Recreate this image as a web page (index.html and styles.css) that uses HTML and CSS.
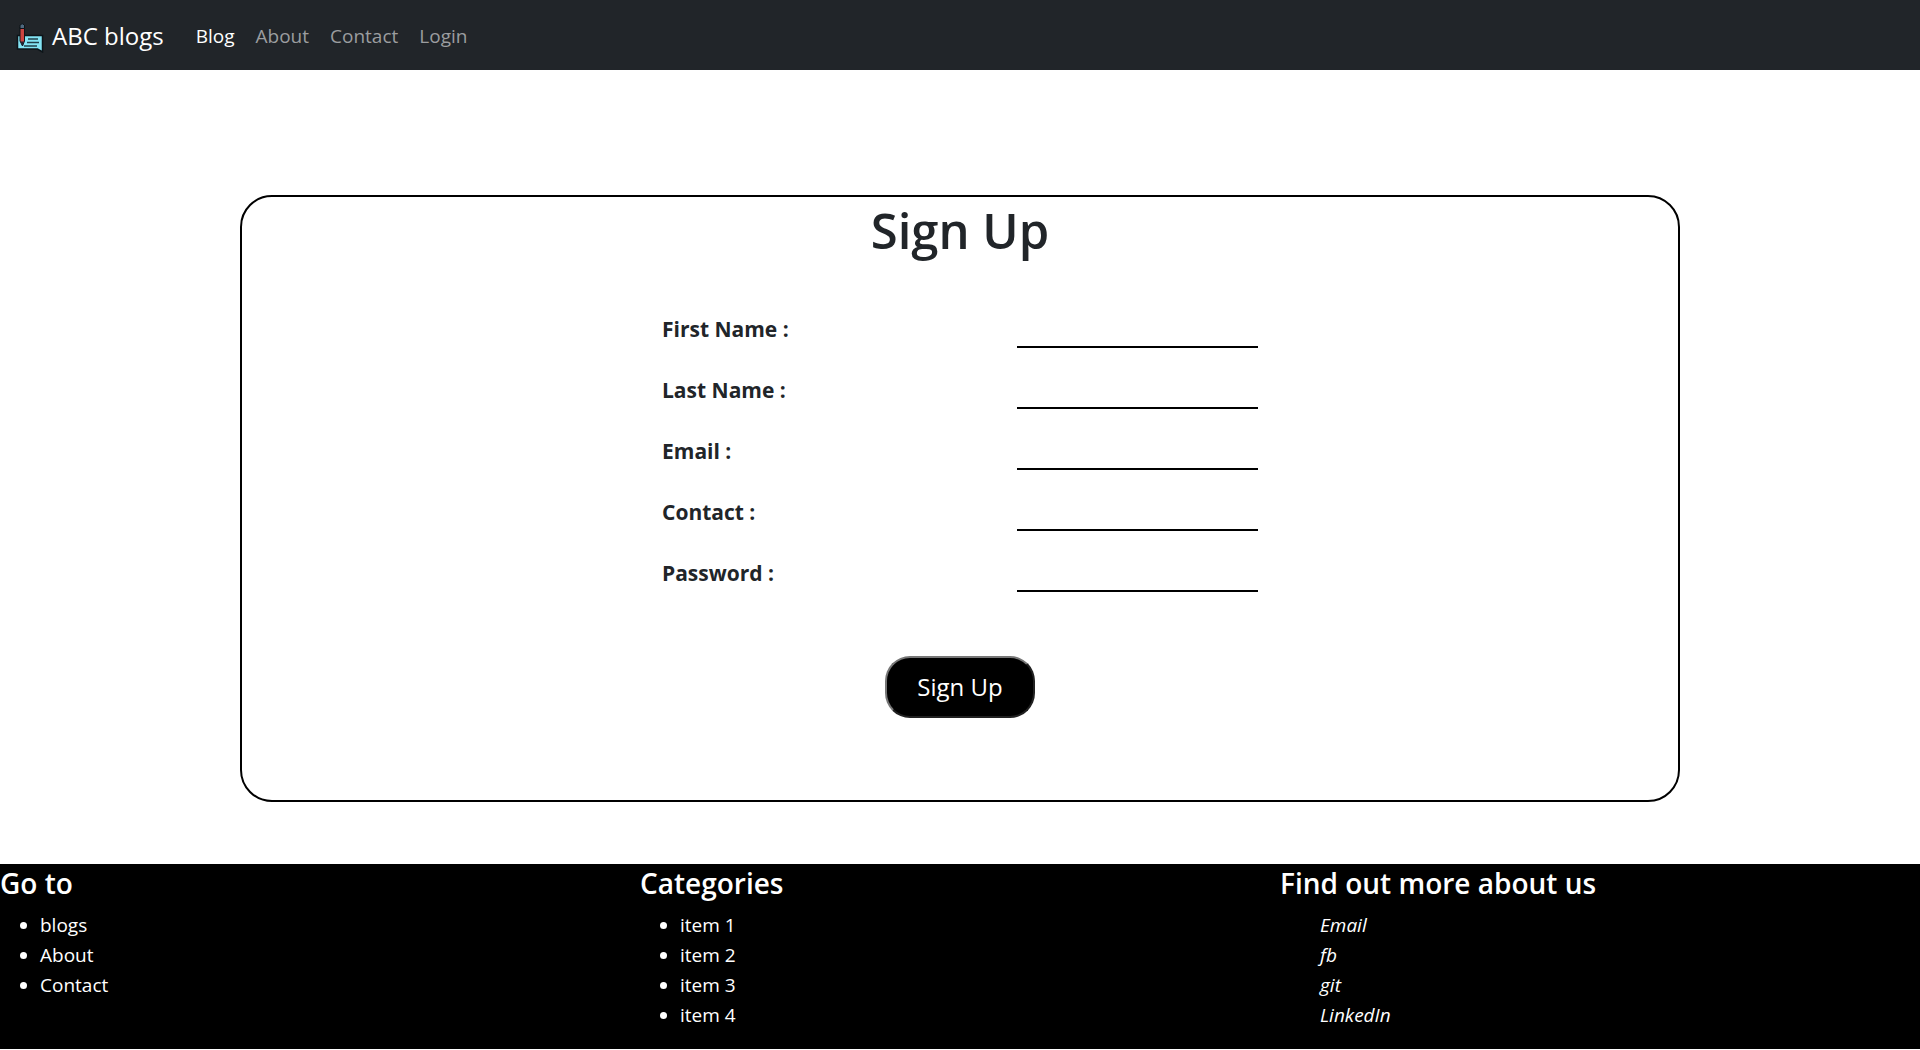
FILE: index.html
```html
<!DOCTYPE html>
<html lang="en">
<head>
<meta charset="utf-8">
<meta name="viewport" content="width=device-width, initial-scale=1">
<title>ABC blogs - Sign Up</title>
<link rel="stylesheet" href="styles.css">
</head>
<body>
<header class="navbar">
  <a class="brand" href="#">
    <svg class="brand-icon" viewBox="0 0 30 30" aria-hidden="true">
      <path d="M2.500 12.500h25v16.500l-5-3h-20z" fill="#83e4f4" stroke="#0d1419" stroke-width="1.500"/>
      <path d="M13 16h10M12 19.500h12M9 23h13" stroke="#20404a" stroke-width="1.300"/>
      <path d="M5 4h4.500v14l-2 5-2.500-5z" fill="#cc4440" stroke="#0d1419"/>
      <path d="M5 2q2.200-2.500 4.500 0v3.500H5z" fill="#506a80" stroke="#0d1419"/>
      <path d="M5.500 18.500h3.500l-1.500 4.500z" fill="#223"/>
    </svg>
    <span>ABC blogs</span>
  </a>
  <nav class="nav-links">
    <a class="nav-link active" href="#">Blog</a>
    <a class="nav-link" href="#">About</a>
    <a class="nav-link" href="#">Contact</a>
    <a class="nav-link" href="#">Login</a>
  </nav>
</header>
<main class="content">
  <form class="card">
    <h1 class="title">Sign Up</h1>
    <div class="fields">
      <div class="field"><label for="first">First Name :</label><input id="first" type="text"></div>
      <div class="field"><label for="last">Last Name :</label><input id="last" type="text"></div>
      <div class="field"><label for="email">Email :</label><input id="email" type="email"></div>
      <div class="field"><label for="contact">Contact :</label><input id="contact" type="text"></div>
      <div class="field"><label for="password">Password :</label><input id="password" type="password"></div>
    </div>
    <button class="submit" type="submit">Sign Up</button>
  </form>
</main>
<footer class="footer">
  <section>
    <h2>Go to</h2>
    <ul><li><a href="#">blogs</a></li><li><a href="#">About</a></li><li><a href="#">Contact</a></li></ul>
  </section>
  <section>
    <h2>Categories</h2>
    <ul><li>item 1</li><li>item 2</li><li>item 3</li><li>item 4</li></ul>
  </section>
  <section>
    <h2>Find out more about us</h2>
    <ul class="social"><li><a href="#">Email</a></li><li><a href="#">fb</a></li><li><a href="#">git</a></li><li><a href="#">LinkedIn</a></li></ul>
  </section>
</footer>
</body>
</html>
```
FILE: styles.css
```css
* { box-sizing: border-box; }
body {
  margin: 0;
  font-family: "Segoe UI", "Open Sans", "Noto Sans", sans-serif;
  font-size: 19px;
  line-height: 30px;
  color: #212529;
  background: #fff;
}
a { color: inherit; text-decoration: none; }
.navbar {
  display: flex;
  align-items: center;
  gap: 20px;
  min-height: 70px;
  padding: 2px 15px 0;
  background: #212529;
}
.brand {
  display: flex;
  align-items: center;
  gap: 7px;
  color: #fff;
  font-size: 24px;
}
.brand-icon { width: 30px; height: 30px; margin-top: 4px; }
.nav-links { display: flex; gap: 1px; padding-left: 2px; }
.nav-link { padding: 10px; color: #9b9d9f; }
.nav-link.active { color: #fff; }
.content { padding: 125px 12.5% 62px; }
.card {
  display: flex;
  flex-direction: column;
  align-items: center;
  padding-bottom: 82px;
  border: 2px solid #000;
  border-radius: 32px;
}
.title {
  margin: 3px 0 47px;
  font-size: 49px;
  font-weight: 600;
  line-height: 60px;
}
.fields { display: grid; gap: 20px; width: 596px; max-width: 100%; }
.field {
  display: flex;
  justify-content: space-between;
  align-items: flex-end;
}
.field label {
  padding-bottom: 4px;
  font-size: 21px;
  font-weight: 700;
  line-height: 30px;
}
.field input {
  width: 241px;
  height: 41px;
  padding: 2px;
  border: 0;
  border-bottom: 2px solid #000;
  background: transparent;
  font: inherit;
  outline: 0;
}
.submit {
  margin-top: 64px;
  padding: 14px 30px;
  border: 2px outset #767676;
  border-radius: 25px;
  background: #000;
  color: #fff;
  font-family: inherit;
  font-size: 24px;
  line-height: 30px;
}
.footer {
  display: grid;
  grid-template-columns: repeat(3, 1fr);
  background: #000;
  color: #fff;
}
.footer h2 {
  margin: 0 0 8px;
  font-size: 28px;
  font-weight: 600;
  line-height: 38px;
}
.footer ul { margin: 0 0 19px; padding-left: 40px; }
.footer .social { list-style: none; font-style: italic; }
```
